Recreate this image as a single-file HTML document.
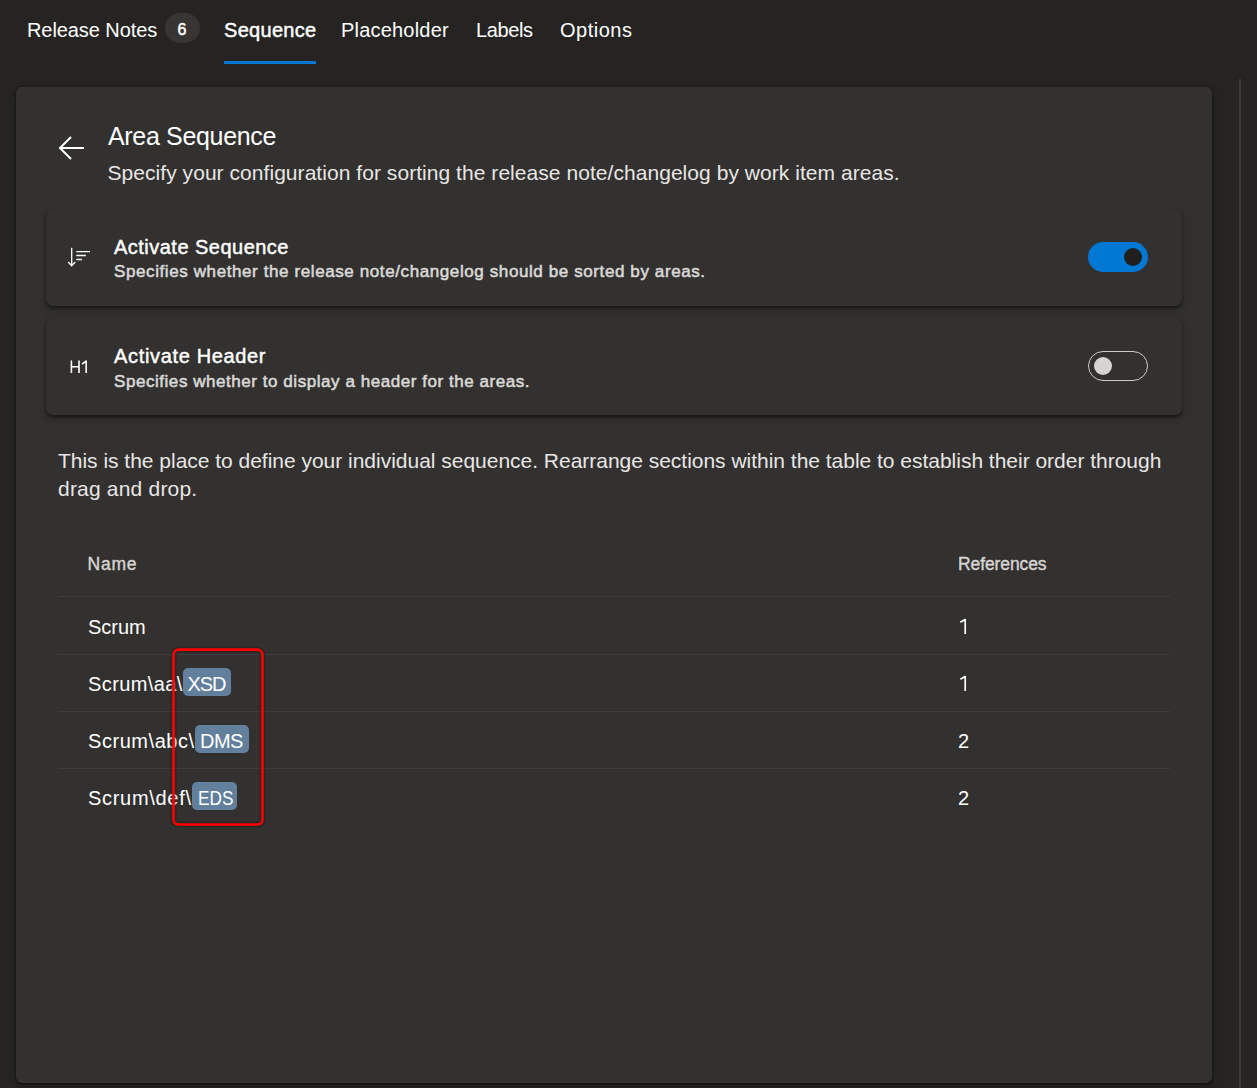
<!DOCTYPE html>
<html><head><meta charset="utf-8">
<style>
*{margin:0;padding:0;box-sizing:border-box}
html,body{width:1257px;height:1088px;overflow:hidden;background:#252422;font-family:"Liberation Sans",sans-serif;color:#fff}
.a{position:absolute;white-space:nowrap;line-height:1}
.tab{font-size:20px;color:#fff;top:20px}
.badge{position:absolute;left:165px;top:13px;width:35px;height:30px;border-radius:15px;background:#363533}
.ul{position:absolute;left:224px;top:61px;width:92px;height:3px;background:#0078d4}
.panel{position:absolute;left:16px;top:87px;width:1196px;height:996px;background:#323130;border-radius:6px;box-shadow:0 0.5px 2px rgba(0,0,0,.5),0 3px 7px rgba(0,0,0,.35)}
.scroll{position:absolute;left:1239px;top:79px;width:2px;height:1009px;background:#3b3a38}
.card{position:absolute;left:46px;width:1136px;height:97px;background:#323130;border-radius:7px;box-shadow:0 2px 3px rgba(0,0,0,.42),0 4px 8px rgba(0,0,0,.22)}
.t1{font-size:20px;-webkit-text-stroke:0.45px #fff}
.t2{font-size:17px;color:#dad8d6;-webkit-text-stroke:0.55px #dad8d6}
.row{position:absolute;left:58px;width:1112px;height:1px;background:#3d3c3b}
.cell{font-size:20px;color:#fff}
.tag{position:absolute;background:#62809b;border-radius:5px;height:28px}
.red{position:absolute;left:172px;top:648px;width:92px;height:177.5px;border:2.5px solid #ff0000;border-radius:5.5px;box-shadow:inset 0 0 4px rgba(0,0,0,.22),0 0 4px rgba(0,0,0,.12)}
</style></head><body>
<div class="a tab" id="tRN" style="left:27px;letter-spacing:-0.08px">Release Notes</div>
<div class="badge"></div>
<div class="a" id="t6" style="left:177.5px;top:21.5px;font-size:16px;-webkit-text-stroke:0.5px #fff">6</div>
<div class="a tab" id="tSeq" style="left:224px;-webkit-text-stroke:0.45px #fff;letter-spacing:0.3px">Sequence</div>
<div class="ul"></div>
<div class="a tab" id="tPh" style="left:341px;letter-spacing:0.2px">Placeholder</div>
<div class="a tab" id="tLb" style="left:476px;letter-spacing:-0.4px">Labels</div>
<div class="a tab" id="tOp" style="left:560px;letter-spacing:0.5px">Options</div>

<div class="scroll"></div>
<div class="panel"></div>

<svg class="a" style="left:50px;top:128px" width="45" height="40" viewBox="0 0 45 40"><path d="M9.2 20H34M21 9L10 20L21 31" stroke="#fff" stroke-width="2" fill="none" stroke-linecap="butt"/></svg>
<div class="a" id="tTitle" style="left:108px;top:123.8px;font-size:25px;letter-spacing:-0.33px">Area Sequence</div>
<div class="a" id="tSub" style="left:107.5px;top:162.2px;font-size:21px;letter-spacing:0.05px;color:#e8e6e4">Specify your configuration for sorting the release note/changelog by work item areas.</div>

<div class="card" style="top:209px"></div>
<div class="card" style="top:318px"></div>

<svg class="a" style="left:55px;top:235px" width="50" height="45" viewBox="0 0 50 45"><path d="M16.7 12.8V30.5M13.2 27L16.7 30.8L20.2 27M21.3 16.7H35M21.3 20.5H30.8M21.3 24.5H26.9" stroke="#fff" stroke-width="1.3" fill="none"/></svg>
<svg class="a" style="left:55px;top:345px" width="50" height="45" viewBox="0 0 50 45"><path d="M16.4 15.5V28M24 15.5V28M16.4 21.7H24M31.2 15.6V28M31.4 15.8L27 19.2" stroke="#fff" stroke-width="1.6" fill="none"/></svg>

<div class="a t1" id="tAS" style="left:114px;top:237px;letter-spacing:0.48px">Activate Sequence</div>
<div class="a t2" id="tASs" style="left:114px;top:263.1px;letter-spacing:0.6px">Specifies whether the release note/changelog should be sorted by areas.</div>
<div class="a t1" id="tAH" style="left:114px;top:346px;letter-spacing:0.66px">Activate Header</div>
<div class="a t2" id="tAHs" style="left:114px;top:372.6px;letter-spacing:0.55px">Specifies whether to display a header for the areas.</div>

<div class="a" style="left:1088px;top:242px;width:60px;height:30px;border-radius:15px;background:#0078d4"></div>
<div class="a" style="left:1124px;top:248px;width:18px;height:18px;border-radius:9px;background:#201f1e"></div>
<div class="a" style="left:1088px;top:351px;width:60px;height:30px;border-radius:15px;border:1.5px solid #cfcdcb"></div>
<div class="a" style="left:1094px;top:357px;width:18px;height:18px;border-radius:9px;background:#d6d4d2"></div>

<div class="a" id="tP1" style="left:58px;top:449.8px;font-size:21px;letter-spacing:-0.018px;color:#e8e6e4">This is the place to define your individual sequence. Rearrange sections within the table to establish their order through</div>
<div class="a" id="tP2" style="left:58px;top:477.7px;font-size:21px;letter-spacing:0.2px;color:#e8e6e4">drag and drop.</div>

<div class="a" id="tName" style="left:87.5px;top:556px;font-size:17.5px;-webkit-text-stroke:0.4px #d6d4d2;letter-spacing:0.8px;color:#d6d4d2">Name</div>
<div class="a" id="tRef" style="left:958px;top:556px;font-size:17.5px;-webkit-text-stroke:0.4px #d6d4d2;letter-spacing:-0.1px;color:#d6d4d2">References</div>
<div class="row" style="top:596px"></div>
<div class="row" style="top:654px"></div>
<div class="row" style="top:711px"></div>
<div class="row" style="top:768px"></div>

<div class="tag" style="left:183px;top:668px;width:48px"></div>
<div class="tag" style="left:195px;top:725px;width:54px"></div>
<div class="tag" style="left:192px;top:782px;width:45px"></div>

<div class="a cell" id="r1" style="left:88px;top:617px">Scrum</div>
<div class="a cell" id="r2" style="left:88px;top:674px;letter-spacing:0.4px">Scrum\aa\</div>
<div class="a cell" id="r3" style="left:88px;top:731px;letter-spacing:0.55px">Scrum\abc\</div>
<div class="a cell" id="r4" style="left:88px;top:788px;letter-spacing:0.7px">Scrum\def\</div>
<div class="a cell" id="x1" style="left:187.5px;top:674px;letter-spacing:-1.1px">XSD</div>
<div class="a cell" id="x2" style="left:200px;top:731px;letter-spacing:-0.5px">DMS</div>
<div class="a cell" id="x3" style="left:197.5px;top:788px;transform:scaleX(0.86);transform-origin:0 0">EDS</div>
<svg class="a" style="left:950px;top:612px" width="30" height="30" viewBox="0 0 30 30"><path d="M15.2 6.9V22M15.5 7.2L10.4 10.2" stroke="#fff" stroke-width="1.7" fill="none"/></svg>
<svg class="a" style="left:950px;top:669px" width="30" height="30" viewBox="0 0 30 30"><path d="M15.2 6.9V22M15.5 7.2L10.4 10.2" stroke="#fff" stroke-width="1.7" fill="none"/></svg>
<div class="a cell" style="left:958px;top:731px">2</div>
<div class="a cell" style="left:958px;top:788px">2</div>
<svg class="a" style="left:160px;top:640px;overflow:visible" width="120" height="200" viewBox="0 0 120 200"><rect x="13.5" y="9.6" width="89" height="174.9" rx="5" fill="none" stroke="rgba(0,0,0,.18)" stroke-width="6"/><rect x="13.5" y="9.6" width="89" height="174.9" rx="5" fill="none" stroke="#ff0000" stroke-width="2.6"/></svg>
</body></html>
